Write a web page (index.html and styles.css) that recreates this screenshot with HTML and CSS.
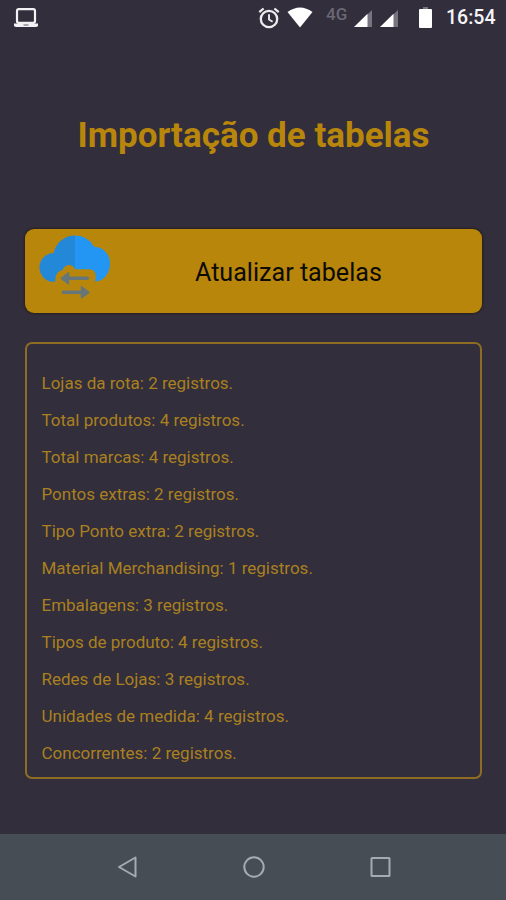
FILE: index.html
```
<!DOCTYPE html>
<html lang="pt-BR">
<head>
<meta charset="utf-8">
<title>Importação de tabelas</title>
<link rel="stylesheet" href="styles.css">
</head>
<body>
<div class="screen">
  <header class="status">
    <svg class="laptop" width="26" height="20" viewBox="0 0 26 20"><rect x="4" y="1.2" width="18" height="13.6" rx="1.8" fill="none" stroke="#f2f1f4" stroke-width="2.2"/><path d="M1 15.6h24v1.6q0 1.8-2 1.8H3q-2 0-2-1.8z" fill="#f2f1f4"/><path d="M10.500 17h5" stroke="#77737f" stroke-width="1.200"/></svg>
    <svg class="alarm" width="22" height="22" viewBox="0 0 22 22" fill="none" stroke="#ececef"><circle cx="11" cy="12" r="8.200" stroke-width="2.300"/><path d="M11 7.300V12.500l3.600 2.200" stroke-width="1.900"/><path d="M1.300 5.200 5.600 1.500M20.700 5.200 16.400 1.500" stroke-width="2.300"/></svg>
    <svg class="wifi" width="26" height="21" viewBox="0 0 26 21"><path d="M.5 5Q13-4 25.500 5L13 20.500z" fill="#fff"/></svg>
    <span class="network">4G</span>
    <svg class="signal" width="18" height="17" viewBox="0 0 18 17"><path d="M12 5.700 18 0v17h-6z" fill="#77737f"/><path d="M0 17 13.500 3.700V17z" fill="#fff"/></svg>
    <svg class="signal second" width="18" height="17" viewBox="0 0 18 17"><path d="M12 5.700 18 0v17h-6z" fill="#77737f"/><path d="M0 17 13.500 3.700V17z" fill="#fff"/></svg>
    <svg class="battery" width="13" height="21" viewBox="0 0 13 21"><path d="M4 0h5v3H4z" fill="#77737f"/><rect y="2" width="13" height="19" rx="1" fill="#fff"/></svg>
    <time class="clock">16:54</time>
  </header>
  <main class="content">
    <h1 class="title">Importação de tabelas</h1>
    <button class="update" type="button">
      <svg class="cloud" width="72" height="66" viewBox="0 0 72 66">
        <path d="M36 .5C25 .5 17 8 14.500 18A14.500 14.500 0 0 0 12 46.700H16.300Q15.500 37 23.500 35Q25.500 30 30.500 30Q34.500 30.500 36 34.300z" fill="#2488d8"/>
        <path d="M36 .5Q49 .5 55 11.700C64 11.700 71 19 71 28.500C71 38 65 46 56 46.700Q59 34.300 50 34.300H36z" fill="#2396f3"/>
        <g fill="#667679" stroke="#667679" stroke-linecap="round" stroke-linejoin="round">
          <path d="M28 43.300H48.300M24.300 57.300H43" fill="none" stroke-width="3.600"/>
          <path d="M22.300 43.300 29.500 37.800V48.800zM50 57.300 42.500 51.800V62.800z" stroke-width="1.500"/>
        </g>
      </svg>
      <span class="label">Atualizar tabelas</span>
    </button>
    <ul class="results">
      <li>Lojas da rota: 2 registros.</li>
      <li>Total produtos: 4 registros.</li>
      <li>Total marcas: 4 registros.</li>
      <li>Pontos extras: 2 registros.</li>
      <li>Tipo Ponto extra: 2 registros.</li>
      <li>Material Merchandising: 1 registros.</li>
      <li>Embalagens: 3 registros.</li>
      <li>Tipos de produto: 4 registros.</li>
      <li>Redes de Lojas: 3 registros.</li>
      <li>Unidades de medida: 4 registros.</li>
      <li>Concorrentes: 2 registros.</li>
    </ul>
  </main>
  <nav class="navbar">
    <svg width="24" height="24" viewBox="0 0 24 24"><path d="M20.500 2.500v19L4 12z"/></svg>
    <svg width="24" height="24" viewBox="0 0 24 24"><circle cx="12" cy="12" r="9.700"/></svg>
    <svg width="24" height="24" viewBox="0 0 24 24"><rect x="2.500" y="3" width="18" height="18" rx=".5"/></svg>
  </nav>
</div>
</body>
</html>
```
FILE: styles.css
```
* { box-sizing: border-box; }
body { margin: 0; background: #322e3b; font-family: Roboto, "Liberation Sans", sans-serif; }
.screen { display: flex; flex-direction: column; height: 900px; overflow: hidden; }
.status { display: flex; align-items: center; height: 36px; padding: 0 10px 0 13px; color: #f5f4f7; }
.alarm { margin-left: auto; margin-top: -1px; }
.wifi { margin-left: 7px; margin-top: -2px; }
.network { margin: -9px 7px 0 13px; width: 21px; font-size: 17px; line-height: 20px; color: #6b6775; font-weight: 500; }
.signal { margin-top: 0; }
.second { margin-left: 8px; }
.battery { margin-left: 21px; margin-top: -1px; }
.clock { width: 50px; margin-left: 14px; font-size: 19.500px; line-height: 24px; font-weight: 500; white-space: nowrap; }
.content { flex: 1; padding: 0 24px 0 25px; }
.title { margin: 79px 0 0; height: 42px; text-align: center; font-size: 35px; line-height: 42px; font-weight: 700; color: #b8860b; white-space: nowrap; }
.update { display: flex; align-items: center; width: 100%; height: 84px; margin-top: 72px; padding: 0 0 0 14px; border: 0; border-radius: 9px; background: #b8860b; box-shadow: 0 0 2px 1px #2a211d; font-family: inherit; color: #0d0b06; }
.cloud { margin-top: -6px; }
.label { margin-left: 84px; padding-top: 4px; font-size: 25.100px; line-height: 30px; }
.results { list-style: none; height: 437px; margin: 29px 0 0; padding: 21px 14px 0 14.500px; border: 2px solid #8e6d22; border-radius: 7px; color: #aa8020; font-size: 17px; line-height: 37px; }
.navbar { display: flex; justify-content: center; align-items: center; gap: 103px; height: 66px; padding-left: 1px; background: #464d55; }
.navbar svg { fill: none; stroke: #a5abae; stroke-width: 2; stroke-linejoin: round; }
```
